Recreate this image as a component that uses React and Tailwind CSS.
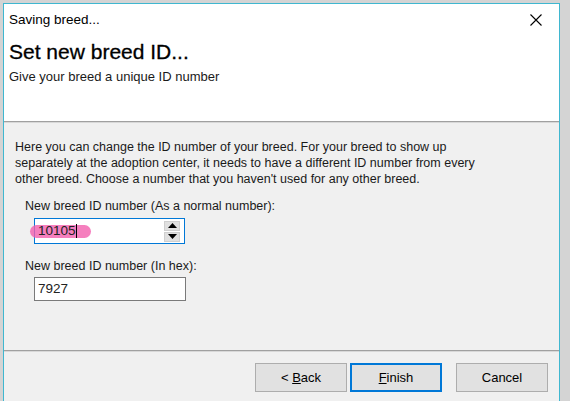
import React from 'react';

const WinButton = ({ children, primary }) => (
    <button
        className={
            primary
                ? "w-[92px] h-[29px] bg-[#e1e1e1] border-2 border-[#0078d7] text-[13px] text-black"
                : "w-[92px] h-[29px] bg-[#e1e1e1] border border-[#adadad] text-[13px] text-black"
        }
    >
        {children}
    </button>
);

const Spinner = () => (
    <div className="flex flex-col gap-[1px] mr-[4px]">
        <div className="w-[16px] h-[10px] bg-[#e0e0e0] border border-[#cfcfcf] flex items-center justify-center">
            <svg width="9" height="5" viewBox="0 0 9 5"><path d="M0 5 L4.5 0 L9 5 Z" fill="#000" /></svg>
        </div>
        <div className="w-[16px] h-[10px] bg-[#e0e0e0] border border-[#cfcfcf] flex items-center justify-center">
            <svg width="9" height="5" viewBox="0 0 9 5"><path d="M0 0 L4.5 5 L9 0 Z" fill="#000" /></svg>
        </div>
    </div>
);

export default function App() {
    return (
        <div className="w-[570px] h-[401px] bg-[#d4d4d4] overflow-hidden pt-[3px] pl-[3px] font-['Liberation_Sans',Arial,sans-serif]">
            <div className="w-[557px] h-[420px] bg-[#f0f0f0] border-l border-t border-r border-[#3fb7d0] flex flex-col">
                {/* header */}
                <div className="bg-white h-[117px] relative">
                    <div className="pl-[5px] pt-[7px] text-[13.5px] text-black leading-[18px]">Saving breed...</div>
                    <button className="absolute right-[13px] top-[6px] w-[20px] h-[20px] flex items-center justify-center">
                        <svg width="12" height="12" viewBox="0 0 12 12">
                            <path d="M0.5 0.5 L11.5 11.5 M11.5 0.5 L0.5 11.5" stroke="#000" strokeWidth="1.1" />
                        </svg>
                    </button>
                    <div className="pl-[5px] pt-[11px] text-[21px] text-black leading-[24px] [-webkit-text-stroke:0.3px_#000]">Set new breed ID...</div>
                    <div className="pl-[5px] pt-[5px] text-[13px] text-[#1a1a1a] leading-[16px]">Give your breed a unique ID number</div>
                </div>
                <div className="h-[1px] bg-[#a0a0a0]" />
                <div className="h-[1px] bg-[#d8d8d8]" />

                {/* body */}
                <div className="h-[227px] pl-[11px] pt-[16px] text-[12.5px] text-[#1a1a1a]">
                    <p className="leading-[16px] whitespace-nowrap">
                        Here you can change the ID number of your breed. For your breed to show up<br />
                        separately at the adoption center, it needs to have a different ID number from every<br />
                        other breed. Choose a number that you haven't used for any other breed.
                    </p>
                    <div className="pl-[10px] pt-[11px]">
                        <div className="leading-[16px]">New breed ID number (As a normal number):</div>
                        <div className="ml-[9px] mt-[4px] w-[151px] h-[26px] bg-white border border-[#0078d7] flex items-center justify-between relative">
                            <div className="absolute left-[-5px] top-[6px] w-[61px] h-[13px] rounded-full bg-[#f25fae] opacity-80" />
                            <span className="relative pl-[3px] text-[13.5px] text-[#222] flex items-center">
                                10105<span className="inline-block w-[1px] h-[14px] bg-black" />
                            </span>
                            <Spinner />
                        </div>
                        <div className="leading-[16px] mt-[14px]">New breed ID number (In hex):</div>
                        <div className="ml-[9px] mt-[3px] w-[152px] h-[24px] bg-white border border-[#7a7a7a] flex items-center pl-[3px] text-[13.5px] text-[#222]">
                            7927
                        </div>
                    </div>
                </div>
                <div className="h-[1px] bg-[#a0a0a0]" />
                <div className="h-[1px] bg-[#d8d8d8]" />

                {/* footer */}
                <div className="flex pt-[11px] pl-[251px]">
                    <WinButton>&lt; <u>B</u>ack</WinButton>
                    <div className="ml-[3px]"><WinButton primary><u>F</u>inish</WinButton></div>
                    <div className="ml-[14px]"><WinButton>Cancel</WinButton></div>
                </div>
            </div>
        </div>
    );
}
